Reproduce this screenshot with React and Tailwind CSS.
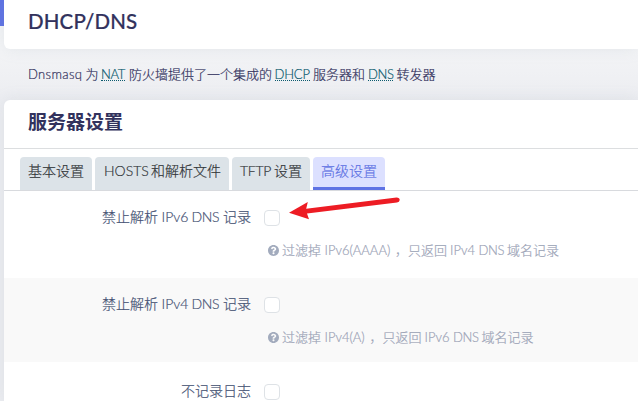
import React from 'react';

function Run({ w, className = '', children }) {
  return (
    <span className={`inline-block whitespace-nowrap ${className}`} style={{ width: w }}>
      {children}
    </span>
  );
}

function Abbr({ w, className = '', children }) {
  return (
    <Run w={w} className={className}>
      <span className="inline-block h-[16px] border-b border-dotted border-[#0b5a6e] leading-[18px] text-[#0b5a6e]">{children}</span>
    </Run>
  );
}

function Tab({ className, children }) {
  return <div className={`flex h-[33px] shrink-0 rounded-t pl-2 leading-[28px] ${className}`}>{children}</div>;
}

function Row({ label, help, className = '' }) {
  return (
    <div className={`flex ${className}`}>
      <div className="flex w-[247px] shrink-0 justify-end text-[14px] leading-[20px] text-[#465374]">{label}</div>
      <div className="ml-[13px] flex flex-col">
        <div className="mt-[3px] h-4 w-4 rounded border border-[#dee2e6] bg-white" />
        {help && (
          <div className="ml-1 mt-[14px] flex items-center text-[13px] leading-[20px] text-[#9ca4b7]">
            <svg className="mr-[3px] h-[11px] w-[11px] shrink-0 text-[#a2abbd]" viewBox="8 8 496 496" fill="currentColor">
              <path d="M504 256c0 137-111 248-248 248S8 393 8 256 119 8 256 8s248 111 248 248zM262.700 90c-54.500 0-89.300 23-116.500 63.800-3.500 5.300-2.400 12.400 2.700 16.300l34.700 26.300c5.200 3.900 12.600 3 16.700-2.100 17.900-22.700 30.100-35.800 57.300-35.800 20.400 0 45.700 13.100 45.700 33 0 15-12.400 22.700-32.500 34C247.100 238.500 216 254.900 216 296v4c0 6.600 5.400 12 12 12h56c6.600 0 12-5.400 12-12v-1.300c0-28.500 83.200-29.600 83.200-106.700 0-58-60.200-102-116.500-102zM256 338c-25.400 0-46 20.600-46 46s20.600 46 46 46 46-20.600 46-46-20.600-46-46-46z" />
            </svg>
            {help}
          </div>
        )}
      </div>
    </div>
  );
}

export default function App() {
  return (
    <div className="relative h-[401px] w-[638px] overflow-hidden bg-[#f3f4f6] font-['Lato','Noto_Sans_CJK_SC',sans-serif] font-light text-[#32325d] [-webkit-text-stroke:0.2px]">
      <div className="absolute left-0 top-0 h-[26px] w-2 bg-[#5e72e4]" />
      <div className="relative ml-1 flex h-[49px] rounded-bl-md bg-white pl-6 shadow-[0_0_16px_rgba(136,152,170,0.15)]">
        <h1 className="mt-[9px] text-[20.500px] font-medium leading-[24px] tracking-[0.15px]">DHCP/DNS</h1>
      </div>
      <div className="flex h-[51px] bg-linear-to-b from-[#f3f4f6] to-[#ecedf1] pl-7 pt-[15px] text-[13px] leading-[20px]">
        <Run w={57.5} className="tracking-[0.35px]">Dnsmasq</Run>
        <Run w={15.500}>为</Run>
        <Abbr w={28} className="tracking-[-0.3px]">NAT</Abbr>
        <Run w={145.500}>防火墙提供了一个集成的</Run>
        <Abbr w={38.500} className="tracking-[-0.2px]">DHCP</Abbr>
        <Run w={55}>服务器和</Run>
        <Abbr w={28.500} className="tracking-[-0.4px]">DNS</Abbr>
        <Run w={39}>转发器</Run>
      </div>
      <div className="bg-[#ecedf1]">
        <div className="relative ml-1 h-[301px] rounded-tl-md bg-white shadow-[0_0_16px_rgba(136,152,170,0.15)]">
          <h2 className="h-[49px] border-b border-[#dcdee0] pl-6 pt-[9px] text-[19px] font-bold leading-[26px] [-webkit-text-stroke:0]">服务器设置</h2>
          <div className="flex h-[42px] gap-[3px] border-b border-[#d8dade] pl-4 pt-2 text-[14px] text-[#323639]">
            <Tab className="w-[72px] bg-[#dce3e8]">基本设置</Tab>
            <Tab className="w-[134px] bg-[#dce3e8]">
              <Run w={48} className="pl-px">HOSTS</Run>
              <Run w={70}>和解析文件</Run>
            </Tab>
            <Tab className="w-[78px] bg-[#dce3e8]">
              <Run w={34} className="tracking-[-0.3px]">TFTP</Run>
              <Run w={28}>设置</Run>
            </Tab>
            <Tab className="w-[72px] border-b-[3px] border-[#5e72e4] bg-[#dce0ff] text-[#5e72e4]">高级设置</Tab>
          </div>
          <Row
            className="h-[87px] pt-4"
            label={<><Run w={59.500}>禁止解析</Run><Run w={30}>IPv6</Run><Run w={31.500} className="tracking-[-0.4px]">DNS</Run><Run w={28}>记录</Run></>}
            help={<><Run w={42.500}>过滤掉</Run><Run w={70.500}>IPv6(AAAA)</Run><Run w={13}>，</Run><Run w={42}>只返回</Run><Run w={28.500}>IPv4</Run><Run w={28.500} className="tracking-[-0.4px]">DNS</Run><Run w={52}>域名记录</Run></>}
          />
          <Row
            className="h-[84px] bg-[#f9f9f9] pt-4"
            label={<><Run w={59.500}>禁止解析</Run><Run w={30}>IPv4</Run><Run w={31.500} className="tracking-[-0.4px]">DNS</Run><Run w={28}>记录</Run></>}
            help={<><Run w={42.500}>过滤掉</Run><Run w={45}>IPv4(A)</Run><Run w={13}>，</Run><Run w={42}>只返回</Run><Run w={28.500}>IPv6</Run><Run w={28.500} className="tracking-[-0.4px]">DNS</Run><Run w={52}>域名记录</Run></>}
          />
          <Row className="h-[39px] pt-[19px]" label="不记录日志" />
        </div>
      </div>
      <svg className="absolute left-[280px] top-[190px]" width="130" height="40" viewBox="280 190 130 40">
        <path d="M396.500 197.500Q399.800 197.500 399.700 200Q399.500 202.200 397 202.600L307 213.600L309 219.200L289 212.700L307.800 202L306.200 208.800Z" fill="#ed1c24" />
      </svg>
    </div>
  );
}
